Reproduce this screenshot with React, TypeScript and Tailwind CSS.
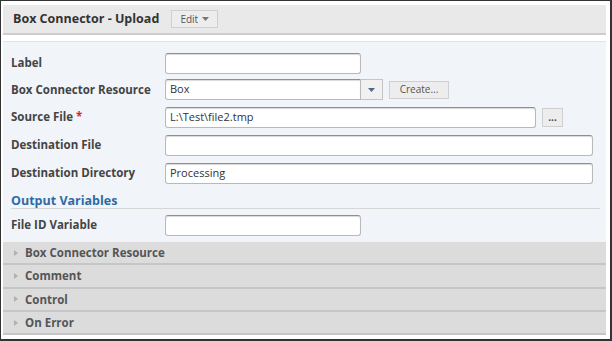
import React from 'react';

const font = { fontFamily: '"Open Sans", "Liberation Sans", sans-serif' };

const inputCls =
  'h-[21px] bg-white border border-[#b9b9b9] border-t-[#8f8f8f] rounded-[3px] shadow-[inset_0_1px_1px_rgba(0,0,0,0.15)] px-[4px] text-[11px] text-[#333] flex items-center';

const Caret = ({ color = '#666' }: { color?: string }) => (
  <svg width="7" height="4" viewBox="0 0 7 4">
    <path d="M0 0 L7 0 L3.5 4 Z" fill={color} />
  </svg>
);

const Row: React.FC<{ label: React.ReactNode; h: string; children?: React.ReactNode }> = ({ label, h, children }) => (
  <div className={`${h} flex items-center`}>
    <div className="w-[154px] text-[11.5px] font-bold text-[#444]">{label}</div>
    {children}
  </div>
);

const sections = ['Box Connector Resource', 'Comment', 'Control', 'On Error'];

export default function App() {
  return (
    <div
      style={font}
      className="w-[612px] h-[341px] bg-white border-l border-t border-r-2 border-b-2 border-[#333] pl-[2px] pt-[4px] pr-[4px] overflow-hidden"
    >
      {/* header */}
      <div className="h-[30px] bg-[#e9e9e9] border-b-2 border-[#cdcdcd] flex items-center pl-[10px]">
        <span className="text-[12.5px] font-bold text-[#333]">Box Connector - Upload</span>
        <button className="ml-[12px] h-[18px] w-[47px] bg-[#ededed] border border-[#d0d0d0] flex items-center justify-center gap-[4px] text-[10px] text-[#555]">
          Edit <Caret color="#777" />
        </button>
      </div>

      {/* body */}
      <div className="mt-[6px] bg-[#f1f4f9] border-t border-[#e3e3e3] pl-[8px] pt-[8px] h-[201px]">
        <Row label="Label" h="h-[26px]">
          <div className={`${inputCls} w-[196px]`} />
        </Row>
        <Row label="Box Connector Resource" h="h-[27px]">
          <div className={`${inputCls} w-[196px] rounded-r-none`}>Box</div>
          <div className="h-[21px] w-[22px] bg-[#f1f1f1] border border-[#c4c4c4] border-l-0 flex items-center justify-center">
            <Caret color="#4d6a88" />
          </div>
          <button className="ml-[6px] h-[18px] w-[60px] bg-[#ededed] border border-[#cfcfcf] text-[10px] text-[#555]">
            Create...
          </button>
        </Row>
        <Row
          h="h-[28px]"
          label={
            <>
              Source File <span className="text-[#d9262b]">*</span>
            </>
          }
        >
          <div className={`${inputCls} w-[371px]`}>L:\Test\file2.tmp</div>
          <button className="ml-[6px] h-[19px] w-[21px] bg-[#ededed] border border-[#cfcfcf] text-[10px] leading-[12px] text-[#444] font-bold">
            ...
          </button>
        </Row>
        <Row label="Destination File" h="h-[28px]">
          <div className={`${inputCls} w-[428px]`} />
        </Row>
        <Row label="Destination Directory" h="h-[28px]">
          <div className={`${inputCls} w-[428px]`}>Processing</div>
        </Row>

        <div className="mt-[7px] mr-[6px] border-b border-[#d6d6d6] leading-[14px] text-[12.5px] font-bold text-[#2f6aa3]">
          Output Variables
        </div>
        <div className="mt-[2px]">
          <Row label="File ID Variable" h="h-[28px]">
            <div className={`${inputCls} w-[196px]`} />
          </Row>
        </div>
      </div>

      {/* collapsed sections */}
      <div>
        {sections.map((s) => (
          <div
            key={s}
            className="h-[23.3px] bg-[#dcdcdc] border-b-2 border-[#c6c6c6] flex items-center pl-[11px] gap-[7px]"
          >
            <svg width="4" height="6" viewBox="0 0 4 6">
              <path d="M0 0 L4 3 L0 6 Z" fill="#b0b0b0" />
            </svg>
            <span className="text-[11.5px] font-bold text-[#555]">{s}</span>
          </div>
        ))}
      </div>
    </div>
  );
}
